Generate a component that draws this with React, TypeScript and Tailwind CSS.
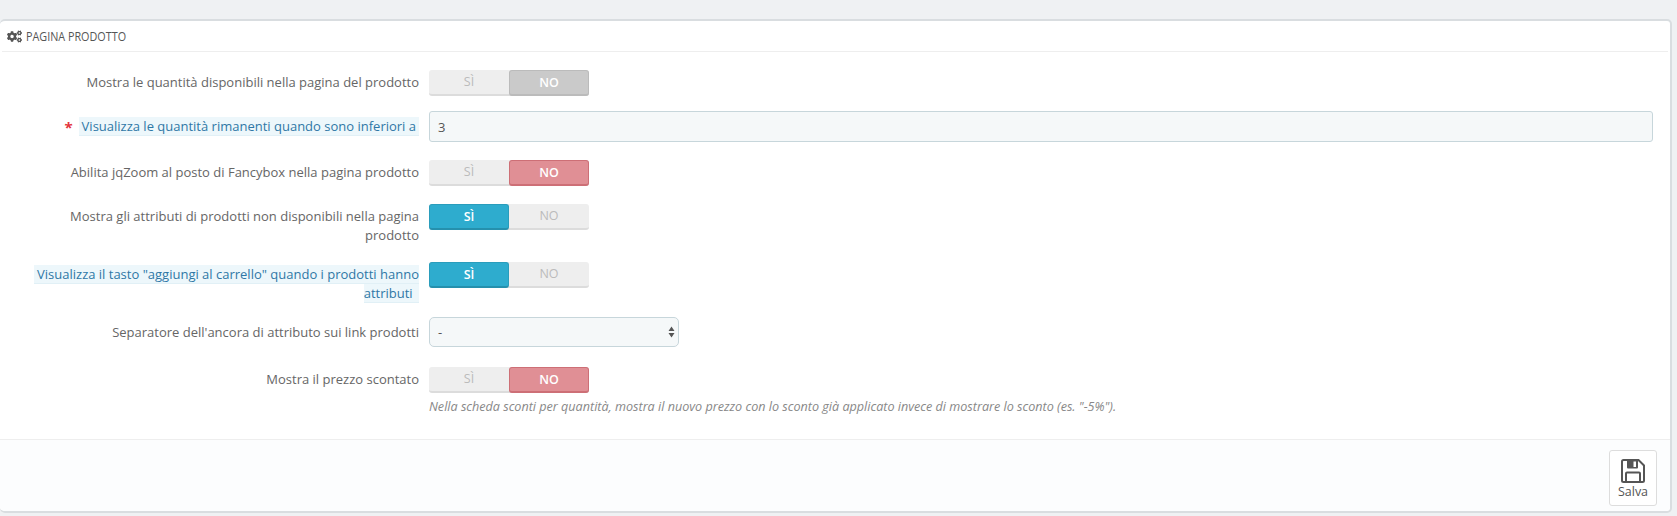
import React from "react";
import { FaCogs } from "react-icons/fa";

interface SwitchProps {
  value: "si" | "no";
  muted?: boolean;
}

const Switch: React.FC<SwitchProps> = ({ value, muted }) => {
  const noClass = muted
    ? "bg-[#cacaca] border border-[#bbbbbb] border-b-2 rounded-[3px] text-white font-semibold"
    : "bg-[#e08f95] border border-[#cd6f76] border-b-2 rounded-[3px] text-white font-semibold";

  return (
    <div className="flex w-[160px] h-[26px] rounded-[3px] bg-[#eeeeee] border-b-2 border-[#dcdcdc] text-[12.5px] leading-[24px] text-center text-[#bbbbbb]">
      {value === "si" ? (
        <div className="w-[80px] h-[26px] bg-[#2eacce] border border-[#2a9dbc] border-b-2 border-b-[#2590ad] rounded-[3px] text-white font-semibold">
          SÌ
        </div>
      ) : (
        <div className="w-[80px] h-[24px]">SÌ</div>
      )}
      {value === "no" ? (
        <div className={`w-[80px] h-[26px] ${noClass}`}>NO</div>
      ) : (
        <div className="w-[80px] h-[24px]">NO</div>
      )}
    </div>
  );
};

interface RowProps {
  label: React.ReactNode;
  className?: string;
  children: React.ReactNode;
}

const Row: React.FC<RowProps> = ({ label, className, children }) => (
  <div className={`flex items-start ${className ?? ""}`}>
    <label className="w-[419px] shrink-0 pl-[30px] text-right text-[13px] leading-[19px] pt-[3px] text-[#666666]">
      {label}
    </label>
    <div className="ml-[10px] flex-1 pr-[17px]">{children}</div>
  </div>
);

const Hint: React.FC<{ children: React.ReactNode }> = ({ children }) => (
  <span className="bg-[#edf7fb] border-b border-[#e1f0f6] text-[#2f77a6] px-[3px]">
    {children}
  </span>
);

const SaveIcon = () => (
  <svg width="24" height="24" viewBox="0 0 24 24" fill="none">
    <path
      d="M1 2.5 Q1 1 2.5 1 H17.5 L23 6.5 V21.5 Q23 23 21.5 23 H2.5 Q1 23 1 21.5 Z"
      stroke="#555555"
      strokeWidth="2"
    />
    <path d="M6 1 H17 V8.5 Q17 9.5 16 9.5 H7 Q6 9.5 6 8.5 Z" fill="#555555" />
    <rect x="12.5" y="2.5" width="2.5" height="5.5" fill="#ffffff" />
    <path d="M5 22.5 V14.5 Q5 13.5 6 13.5 H18 Q19 13.5 19 14.5 V22.5" stroke="#555555" strokeWidth="2" />
  </svg>
);

export default function App() {
  return (
    <div
      className="h-[516px] overflow-hidden bg-[#eff1f3] pt-[19px] pr-[5px]"
      style={{ fontFamily: '"Open Sans", "Liberation Sans", sans-serif' }}
    >
      <div className="h-[494px] rounded-[5px] border-t-2 border-r-2 border-b-2 border-[#d9dde0] bg-white flex flex-col">
        <div className="h-[31px] mx-[2px] border-b border-[#eeeeee] flex items-center pl-[5px] gap-[4px] text-[#555555]">
          <FaCogs className="w-[15px] h-[13px]" />
          <span className="text-[13.5px] scale-x-[0.8] origin-left whitespace-nowrap">PAGINA PRODOTTO</span>
        </div>

        <div className="pt-[18px]">
          <Row label="Mostra le quantità disponibili nella pagina del prodotto" className="mb-[15px]">
            <Switch value="no" muted />
          </Row>
          <Row
            label={
              <>
                <span className="text-[#e3343c] text-[15px] leading-[13px] font-bold mr-[6px] align-[-2px]">*</span>
                <Hint>Visualizza le quantità rimanenti quando sono inferiori a</Hint>
              </>
            }
            className="mb-[18px] [&>label]:pt-[6px]"
          >
            <input
              readOnly
              value="3"
              className="w-full h-[31px] rounded-[3px] border border-[#c7d6db] bg-[#f5f8f9] px-[8px] text-[13px] text-[#555555]"
            />
          </Row>
          <Row label="Abilita jqZoom al posto di Fancybox nella pagina prodotto" className="mb-[18px]">
            <Switch value="no" />
          </Row>
          <Row label="Mostra gli attributi di prodotti non disponibili nella pagina prodotto" className="mb-[17px]">
            <Switch value="si" />
          </Row>
          <Row
            label={<Hint>Visualizza il tasto "aggiungi al carrello" quando i prodotti hanno attributi&nbsp;</Hint>}
            className="mb-[14px]"
          >
            <Switch value="si" />
          </Row>
          <Row label="Separatore dell'ancora di attributo sui link prodotti" className="mb-[20px] [&>label]:pt-[6px]">
            <div className="relative w-[250px] h-[30px] rounded-[5px] border border-[#c7d6db] bg-[#f5f8f9] px-[8px] text-[13px] leading-[28px] text-[#555555]">
              -
              <svg className="absolute right-[3px] top-[8px]" width="7" height="12" viewBox="0 0 7 12">
                <path d="M3.5 0.5 L6.5 5 L0.5 5 Z M3.5 11.5 L6.5 7 L0.5 7 Z" fill="#555555" />
              </svg>
            </div>
          </Row>
          <Row label="Mostra il prezzo scontato">
            <Switch value="no" />
            <p className="mt-[5px] text-[12.6px] leading-[18px] italic text-[#888888]">
              Nella scheda sconti per quantità, mostra il nuovo prezzo con lo sconto già applicato invece di mostrare lo sconto (es. "-5%").
            </p>
          </Row>
        </div>

        <div className="mt-auto h-[72px] border-t border-[#eeeeee] bg-[#fcfdfe] rounded-b-[5px] flex justify-end pt-[10px] pr-[13px]">
          <button className="w-[48px] h-[56px] rounded-[3px] border border-[#dddddd] bg-white flex flex-col items-center pt-[8px] text-[#555555]">
            <SaveIcon />
            <span className="text-[12.5px] leading-[16px] mt-[1px]">Salva</span>
          </button>
        </div>
      </div>
    </div>
  );
}
